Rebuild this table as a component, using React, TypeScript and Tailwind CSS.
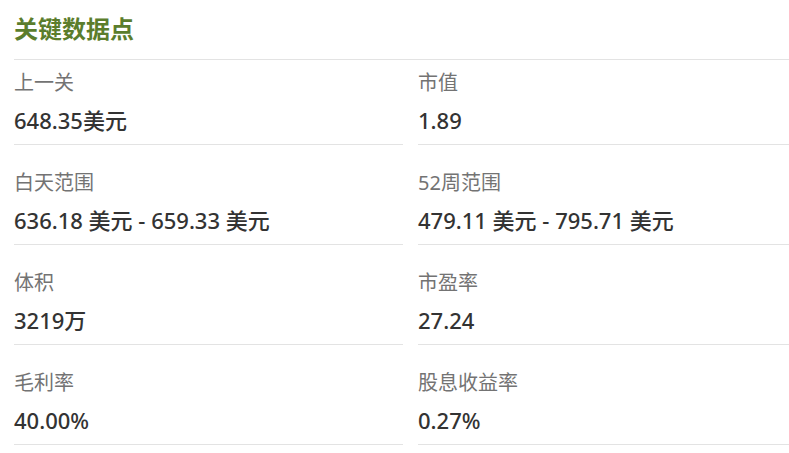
const stats = [
  { label: "上一关", value: "648.35美元" },
  { label: "市值", value: "1.89" },
  { label: "白天范围", value: "636.18 美元 - 659.33 美元" },
  { label: "52周范围", value: "479.11 美元 - 795.71 美元" },
  { label: "体积", value: "3219万" },
  { label: "市盈率", value: "27.24" },
  { label: "毛利率", value: "40.00%" },
  { label: "股息收益率", value: "0.27%" },
];

export default function App() {
  return (
    <div className="w-[789px] h-[453px] overflow-hidden bg-white font-['Segoe_UI','Noto_Sans','Noto_Sans_CJK_SC',sans-serif]">
      <div className="ml-[14px] w-[793px] pt-[14px]">
        {/* Header */}
        <h2 className="border-b border-[#e3e3e3] pb-[15px] text-[24px] font-bold leading-[30px] text-[#5b7d2c]">
          关键数据点
        </h2>

        {/* Stats grid */}
        <div className="grid grid-cols-2 gap-x-[15px] gap-y-[15px]">
          {stats.map((s) => (
            <div key={s.label} className="border-b border-[#e3e3e3] pt-[11px] pb-[10px]">
              <div className="text-[20px] leading-[24px] text-[#737373]">{s.label}</div>
              <div className="mt-[11px] text-[22px] font-medium leading-[28px] text-[#333333]">
                {s.value}
              </div>
            </div>
          ))}
        </div>
      </div>
    </div>
  );
}
